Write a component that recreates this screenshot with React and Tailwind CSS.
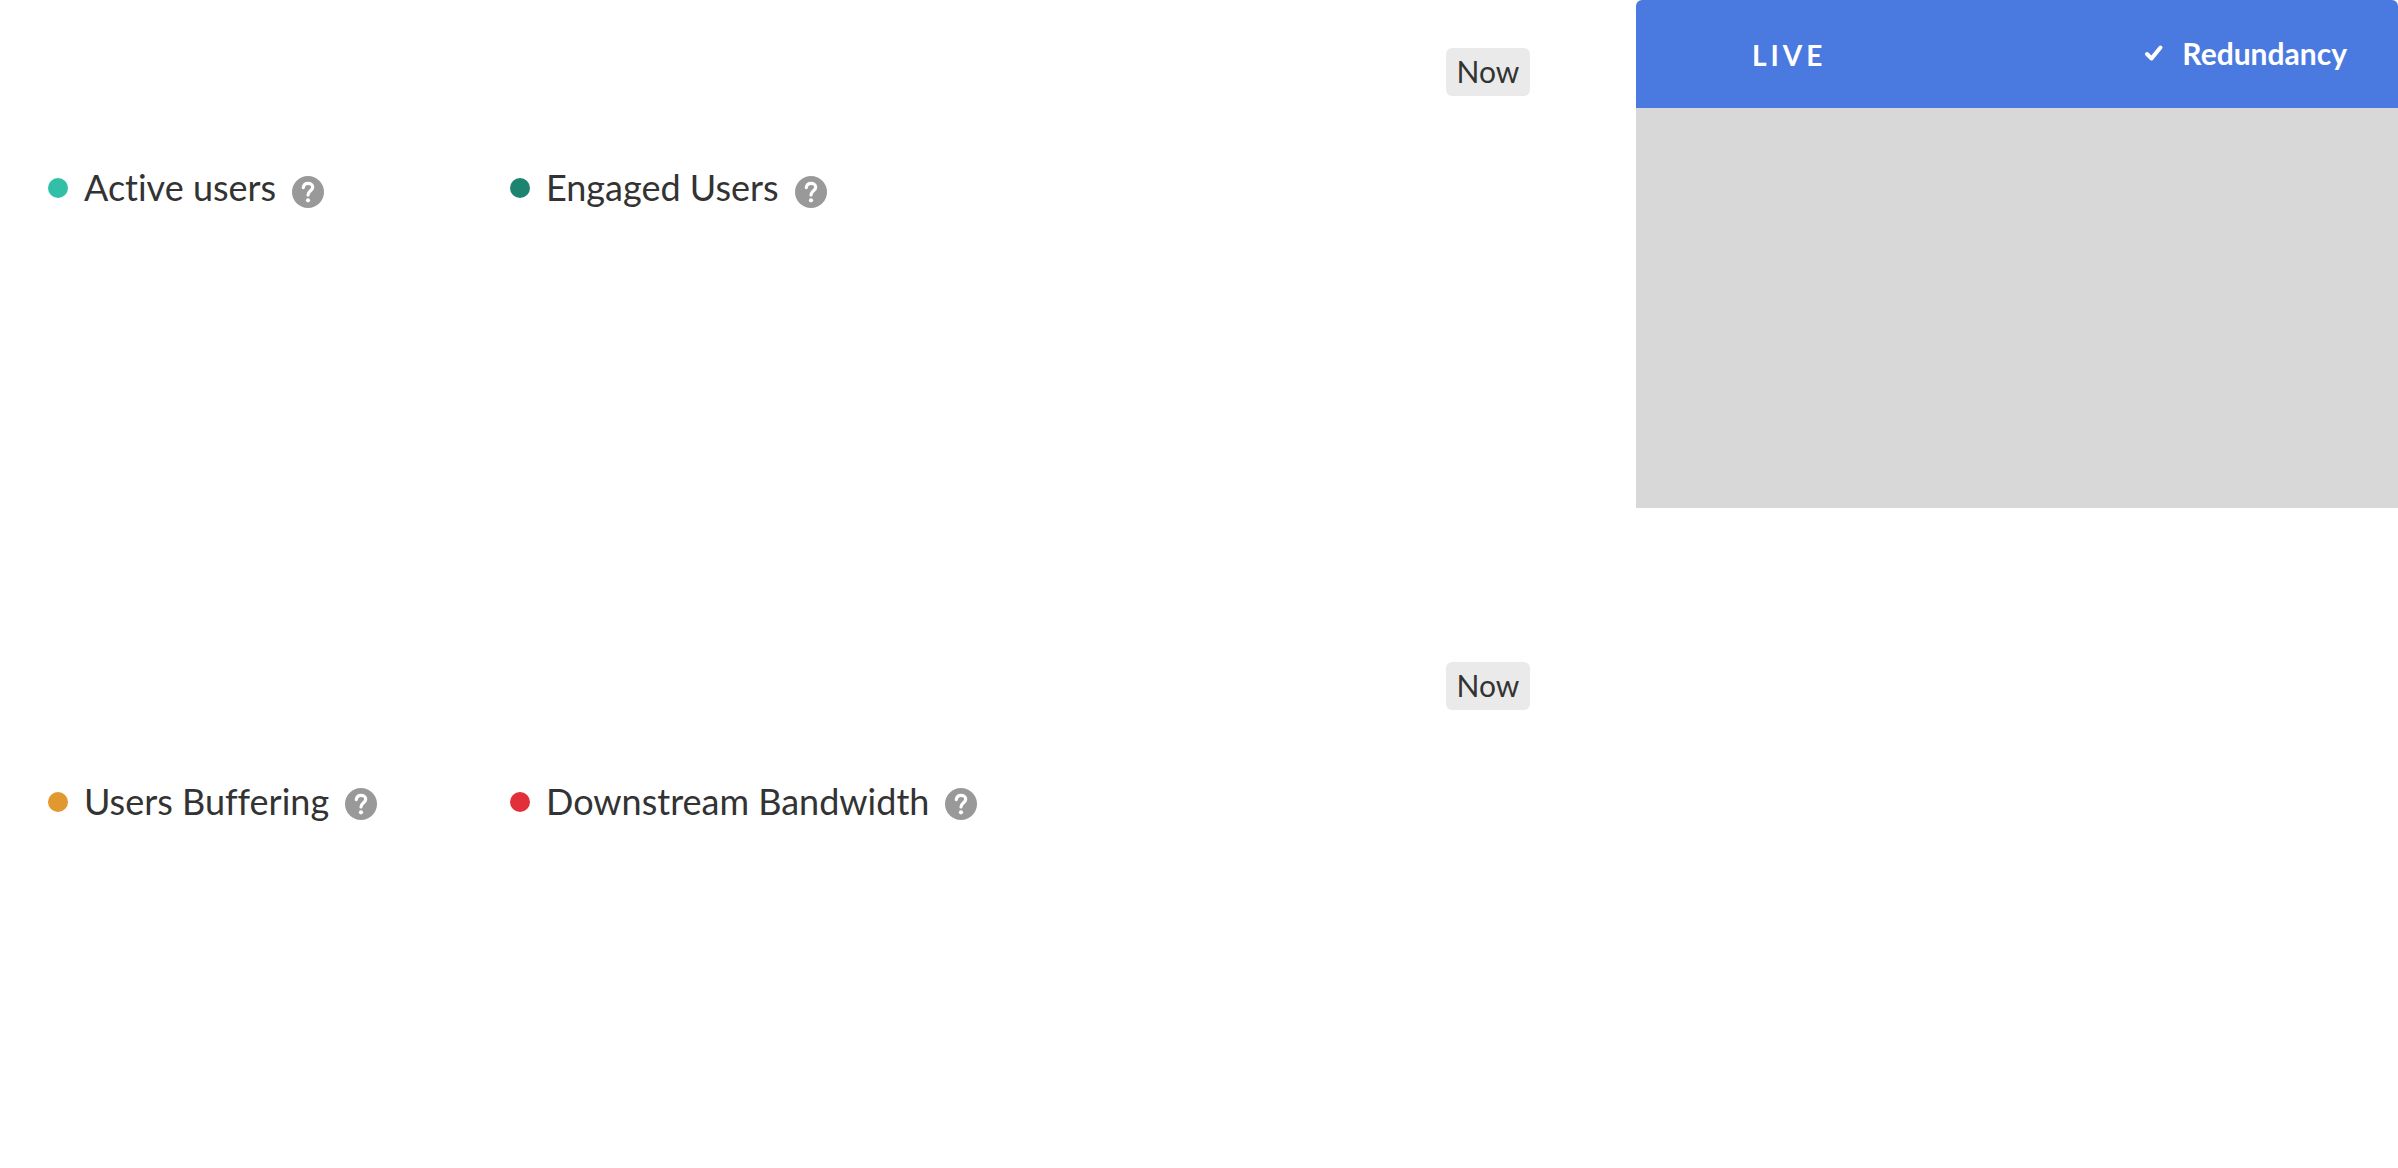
function HelpIcon() {
  return (
    <svg viewBox="0 0 32 32" className="size-8" aria-hidden="true">
      <circle cx="16" cy="16" r="16" fill="#999999" />
      <path
        d="M11.3 11.6C11.6 8.9 13.4 7.3 16 7.3C18.8 7.3 20.7 8.9 20.7 11.2C20.7 14.6 16 14.9 16 19"
        fill="none"
        stroke="#fff"
        strokeWidth="3.2"
        strokeLinecap="round"
      />
      <circle cx="16" cy="24.3" r="2.1" fill="#fff" />
    </svg>
  );
}

function Metric({ label, dot, help }) {
  return (
    <div className="flex items-center">
      <span className={`mr-4 size-5 shrink-0 rounded-full ${dot}`} />
      <h2 className="pb-0.5 text-[36px] leading-[42px] whitespace-nowrap">{label}</h2>
      <button type="button" aria-label={`About ${label}`} className={`ml-4 shrink-0 ${help}`}>
        <HelpIcon />
      </button>
    </div>
  );
}

function MetricPanel({ metrics, help }) {
  return (
    <section className="h-[614px] pt-12 pr-[106px] pl-12">
      <div className="flex justify-end">
        <span className="flex h-12 w-[84px] items-center justify-center rounded-md bg-[#eaeaea] pb-0.5 text-[30px] leading-9">
          Now
        </span>
      </div>
      <div className="mt-[70px] grid grid-cols-[462px_1fr]">
        {metrics.map((m) => (
          <Metric key={m.label} {...m} help={help} />
        ))}
      </div>
    </section>
  );
}

const audience = [
  { label: "Active users", dot: "bg-[#31bfa7]" },
  { label: "Engaged Users", dot: "bg-[#1d8471]" },
];

const delivery = [
  { label: "Users Buffering", dot: "bg-[#e1982f]" },
  { label: "Downstream Bandwidth", dot: "bg-[#e2303a]" },
];

export default function App() {
  return (
    <div className="flex min-h-screen overflow-hidden bg-white font-['Lato',sans-serif] text-[#333333] [font-variant-ligatures:none]">
      <main className="-mb-[60px] min-w-0 flex-1">
        <MetricPanel metrics={audience} help="mt-2" />
        <MetricPanel metrics={delivery} help="mt-1" />
      </main>
      <aside className="w-[762px] shrink-0">
        <header className="flex h-[108px] items-center justify-between rounded-t-md bg-[#4a7ae0] pr-[51px] pb-0.5 pl-[116px] font-bold text-white">
          <span className="mt-1 text-[28px] leading-9 tracking-[4px]">LIVE</span>
          <span className="flex items-center text-[30px] leading-9">
            <svg viewBox="0 0 20 18" className="mr-[18px] h-[18px] w-5" aria-hidden="true">
              <path
                d="M3 10L7.5 14.5L16.5 3.5"
                fill="none"
                stroke="#fff"
                strokeWidth="4"
                strokeLinecap="round"
                strokeLinejoin="round"
              />
            </svg>
            Redundancy
          </span>
        </header>
        <div className="h-[400px] bg-[#d8d8d8]" />
      </aside>
    </div>
  );
}
